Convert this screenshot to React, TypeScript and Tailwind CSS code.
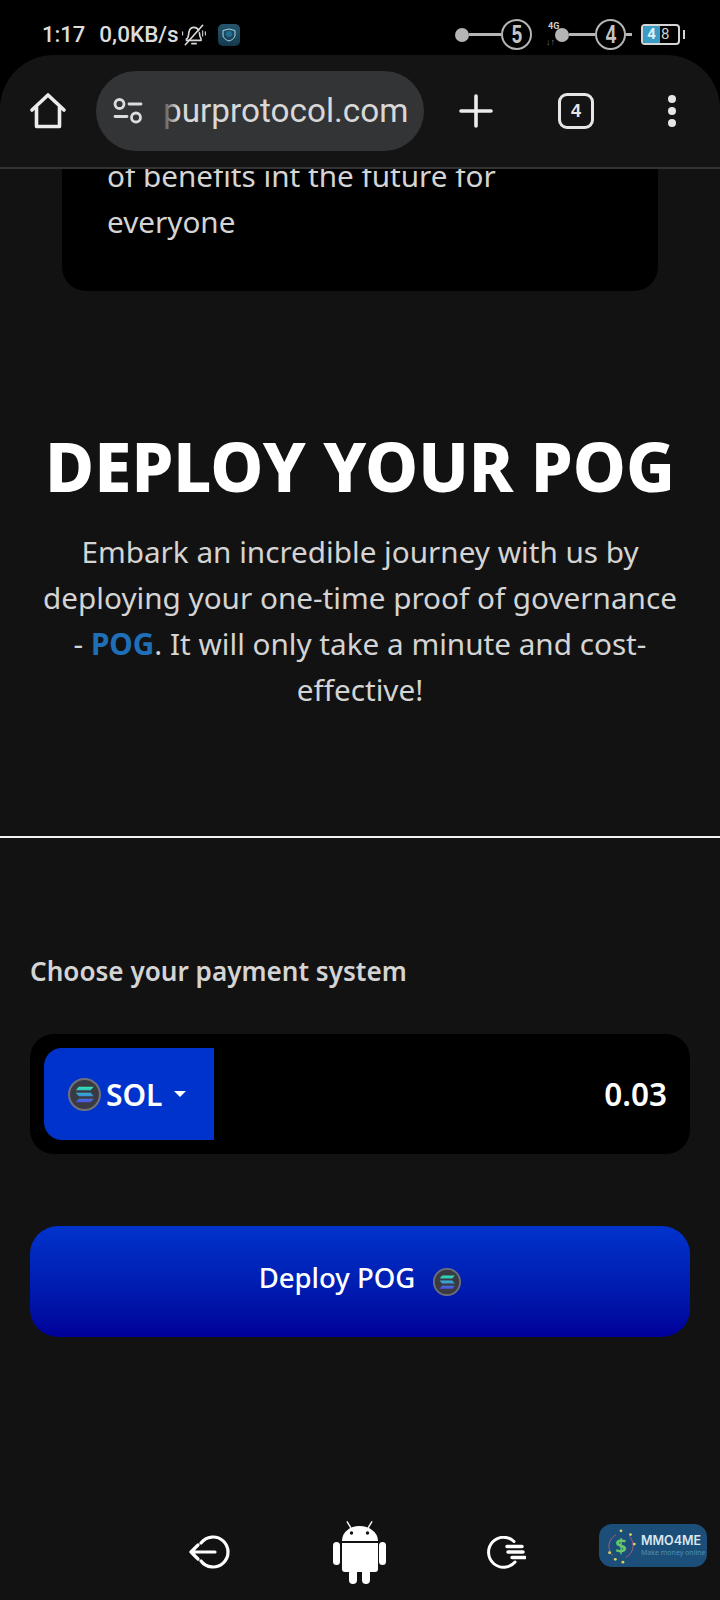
import React from 'react';

const sans = "font-['Noto_Sans','Liberation_Sans',sans-serif]";

function SolCoin({ size }: { size: number }) {
  return (
    <svg width={size} height={size} viewBox="0 0 32 32" className="shrink-0">
      <defs>
        <linearGradient id="solGrad" x1="0" y1="0" x2="0" y2="1">
          <stop offset="0" stopColor="#2fe0b0" />
          <stop offset="0.5" stopColor="#3a9fd8" />
          <stop offset="1" stopColor="#4a4fe0" />
        </linearGradient>
      </defs>
      <circle cx="16" cy="16" r="15" fill="#3a3a42" stroke="#70707a" strokeWidth="2" />
      <path d="M10.500 8.500H25l-3 3.400H7.500zM7.500 14.400H22l3 3.200H10.500zM10.500 20.200H25l-3 3.400H7.500z" fill="url(#solGrad)" />
    </svg>
  );
}

function Ring({ n }: { n: string }) {
  return (
    <div className="w-[31px] h-[31px] shrink-0 rounded-full border-2 border-[#b5b5b5] flex items-center justify-center text-[#c4c4c4] text-[25px] leading-none font-bold font-['Liberation_Sans',sans-serif]">
      <span className="scale-x-75">{n}</span>
    </div>
  );
}

function StatusBar() {
  return (
    <div className="h-[55px] bg-black flex items-center pl-[42px] pr-[35px] pt-[14px] text-[#dcdcdc] font-['Roboto',sans-serif] font-medium text-[22px]">
      <span>1:17</span>
      <span className="ml-[14px] text-[22.500px]">0,0KB/s</span>
      <svg width="26" height="26" viewBox="0 0 24 24" fill="none" stroke="#d8d8d8" strokeWidth="1.500" strokeLinecap="round" strokeLinejoin="round" className="ml-[2px]">
        <path d="M6 15c1-2 1-4 1.400-6C8 6.500 10 5 12 5s3.500 1 4.300 3M17 10c0 2 .5 4 1.500 5.500V17H5v-1.500M10 20h4" />
        <path d="M4 21L20 3" />
        <path d="M20 8v5M22.500 9v3M1.500 9v3" strokeWidth="1" />
      </svg>
      <div className="ml-[11px] w-[22px] h-[22px] rounded-[5px] bg-gradient-to-b from-[#24566e] to-[#163a4e] flex items-center justify-center">
        <svg width="16" height="16" viewBox="0 0 16 16" fill="none" stroke="#a8d4e0" strokeWidth="1">
          <path d="M2 3.500 8 2l6 1.500V8c0 3-3 5-6 6-3-1-6-3-6-6z" />
          <circle cx="8" cy="7" r="3" fill="#1f6f92" stroke="none" />
        </svg>
      </div>
      <div className="ml-auto flex items-center">
        <div className="w-[14px] h-[14px] rounded-full bg-[#b5b5b5]" />
        <div className="w-[32px] h-[3px] bg-[#b5b5b5]" />
        <Ring n="5" />
        <div className="relative w-[23px] h-[30px]">
          <span className="absolute left-[16px] top-[2px] text-[9px] leading-none font-bold text-[#cfcfcf]">4G</span>
          <span className="absolute left-[14px] top-[18px] text-[9px] leading-none text-[#777]">↓↑</span>
        </div>
        <div className="w-[14px] h-[14px] rounded-full bg-[#b5b5b5]" />
        <div className="w-[26px] h-[3px] bg-[#b5b5b5]" />
        <Ring n="4" />
        <div className="w-[6px] h-[3px] bg-[#b5b5b5]" />
        <div className="ml-[9px] w-[39px] h-[21px] rounded-[4px] border-2 border-[#d5d5d5] flex overflow-hidden text-[15px] leading-[17px] font-bold text-center">
          <span className="w-[17px] bg-[#3a9cc4] text-[#d9f2fb]">4</span>
          <span className="pl-[1px] text-[#cfcfcf] font-normal">8</span>
        </div>
        <div className="ml-[3px] w-[2px] h-[9px] bg-[#d5d5d5]" />
      </div>
    </div>
  );
}

function Toolbar() {
  return (
    <div className="bg-black">
      <div className="h-[114px] bg-[#141414] rounded-t-[54px] border-b-2 border-[#333] flex items-center pl-[29px]">
        <svg width="38" height="38" viewBox="0 0 38 38" fill="none" stroke="#ececec" strokeWidth="3.600" strokeLinejoin="round" strokeLinecap="round">
          <path d="M3 18 19 3l16 15" />
          <path d="M7.500 15v19.500h23V15" />
        </svg>
        <div className="relative ml-[29px] w-[328px] h-[80px] rounded-[40px] bg-[#333436] flex items-center pl-[17px] overflow-hidden">
          <svg width="30" height="26" viewBox="0 0 30 26" fill="none" stroke="#dcdcdc" strokeWidth="2.800" strokeLinecap="round" className="shrink-0">
            <circle cx="6.500" cy="6" r="4.500" />
            <circle cx="23" cy="19.500" r="4.500" />
            <path d="M16 6h12M2 18.500h12" />
          </svg>
          <span className="ml-[20px] text-[33.300px] leading-none text-[#d8d8d8] font-['Roboto',sans-serif] whitespace-nowrap pb-[1px]">purprotocol.com</span>
          {/* long address fades out on its left edge */}
          <div className="absolute left-[64px] top-0 bottom-0 w-[18px] bg-gradient-to-r from-[#333436] to-transparent" />
        </div>
        <svg width="34" height="34" viewBox="0 0 34 34" stroke="#ececec" strokeWidth="3.600" strokeLinecap="round" className="ml-[35px]">
          <path d="M17 2v30M2 17h30" />
        </svg>
        <div className="ml-[65px] w-[36px] h-[36px] rounded-[9px] border-[3.500px] border-[#e6e6e6] flex items-center justify-center text-[#e6e6e6] text-[18px] font-bold font-['Liberation_Sans',sans-serif]">
          4
        </div>
        <div className="ml-[74px] flex flex-col gap-[4px]">
          <span className="w-[8px] h-[8px] rounded-full bg-[#e6e6e6]" />
          <span className="w-[8px] h-[8px] rounded-full bg-[#e6e6e6]" />
          <span className="w-[8px] h-[8px] rounded-full bg-[#e6e6e6]" />
        </div>
      </div>
    </div>
  );
}

export default function App() {
  return (
    <div className={`w-[720px] h-[1600px] overflow-hidden bg-[#121212] flex flex-col ${sans}`}>
      <StatusBar />
      <Toolbar />

      <div className="mx-[62px] h-[122px] bg-black rounded-b-[24px] overflow-hidden pl-[45px]">
        <p className="-mt-[16px] text-[29.700px] leading-[46px] text-[#d4d4d4]">
          of benefits int the future for<br />everyone
        </p>
      </div>

      <h1 className="mt-[133px] text-center text-[67px] leading-[84px] font-extrabold text-white whitespace-nowrap">
        DEPLOY YOUR POG
      </h1>
      <p className="mt-[21px] mx-[36px] text-center text-[29.700px] leading-[46px] text-[#d4d4d4]">
        Embark an incredible journey with us by deploying your one-time proof of governance -{' '}
        <span className="font-bold text-[#1f6fb8]">POG</span>. It will only take a minute and cost-effective!
      </p>

      <div className="mt-[123px] h-[2px] bg-[#f2f2f2]" />

      <div className="mt-[114px] px-[30px]">
        <h2 className="text-[26.100px] leading-[38px] font-semibold text-[#d4d4d4]">Choose your payment system</h2>

        <div className="mt-[44px] h-[120px] rounded-[24px] bg-black flex items-center pl-[14px] pr-[23px]">
          <div className="w-[170px] h-[92px] rounded-l-[18px] bg-[#0033cc] flex items-center pl-[24px]">
            <SolCoin size={33} />
            <span className="ml-[5px] pt-[2px] text-[30px] font-semibold text-white leading-none">SOL</span>
            <span className="ml-[11px] w-0 h-0 border-x-[6px] border-x-transparent border-t-[6px] border-t-white" />
          </div>
          <span className="ml-auto pb-[1px] text-[31.500px] font-semibold text-white">0.03</span>
        </div>

        <button className="mt-[72px] w-full h-[111px] rounded-[28px] bg-gradient-to-b from-[#0033cc] to-[#000099] flex items-center justify-center gap-[18px] text-white text-[27.500px] font-medium">
          <span className="pb-[7px]">Deploy POG</span>
          <SolCoin size={28} />
        </button>
      </div>

      <div className="mt-auto h-[108px] relative flex items-center pl-[189px] pt-[12px]">
        <svg width="41" height="34" viewBox="0 0 41 34" fill="none" stroke="white" strokeWidth="3.200" strokeLinecap="round" strokeLinejoin="round">
          <path d="M12 8a15 15 0 1 1 0 18" />
          <path d="M26 17H2M9 10l-7 7 7 7" />
        </svg>
        <svg width="53" height="63" viewBox="0 0 53 63" fill="white" className="ml-[103px]">
          <path d="M14.500 0l4 6.500-1.200.7-4-6.500zM38.500 0l-4 6.500 1.200.7 4-6.500z" />
          <path d="M9 20C9 11 17 5 26.500 5S45 11 45 20z" />
          <circle cx="18.500" cy="12" r="1.700" fill="#121212" />
          <circle cx="34.500" cy="12" r="1.700" fill="#121212" />
          <path d="M9 22h36v26a3 3 0 0 1-3 3H12a3 3 0 0 1-3-3z" />
          <rect x="0" y="21" width="7" height="23" rx="3.500" />
          <rect x="46" y="21" width="7" height="23" rx="3.500" />
          <rect x="16" y="48" width="8" height="15" rx="4" />
          <rect x="29" y="48" width="8" height="15" rx="4" />
        </svg>
        <svg width="39" height="33" viewBox="0 0 39 33" fill="none" stroke="white" strokeWidth="3" strokeLinecap="round" className="ml-[101px]">
          <path d="M27 5.500A15 15 0 1 0 28 26" />
          <path d="M20 10.500h15M21 16h15M25 21.500h13" strokeWidth="3.500" />
        </svg>

        {/* watermark sits over the page corner */}
        <div className="absolute left-[599px] top-[32px] w-[108px] h-[43px] rounded-[13px] bg-[#1b4e78] flex items-center pl-[5px]">
          <svg width="34" height="38" viewBox="0 0 34 40" fill="none" className="shrink-0">
            <path d="M8 30A14 14 0 0 1 12 8" stroke="#b05a7a" strokeWidth="1" />
            <path d="M26 10A14 14 0 0 1 22 32" stroke="#b05a7a" strokeWidth="1" />
            <circle cx="17" cy="4" r="1.500" fill="#e2d25a" />
            <circle cx="27" cy="8" r="1.500" fill="#e2d25a" />
            <circle cx="31" cy="18" r="1.500" fill="#e2d25a" />
            <circle cx="5" cy="27" r="1.500" fill="#e2d25a" />
            <circle cx="11" cy="34" r="1.500" fill="#e2d25a" />
            <circle cx="19" cy="37" r="1.500" fill="#e2d25a" />
            <text x="17" y="27" textAnchor="middle" fontSize="21" fontWeight="700" fill="#6cc56c" fontFamily="Noto Sans">$</text>
          </svg>
          <div className="ml-[3px] flex flex-col leading-none whitespace-nowrap">
            <span className="text-[12.500px] font-semibold text-[#dbe7f0] font-['Inter',sans-serif]">MMO4ME</span>
            <span className="mt-[1px] text-[7px] text-[#4f8fb5]">Make money online</span>
          </div>
        </div>
      </div>
    </div>
  );
}
